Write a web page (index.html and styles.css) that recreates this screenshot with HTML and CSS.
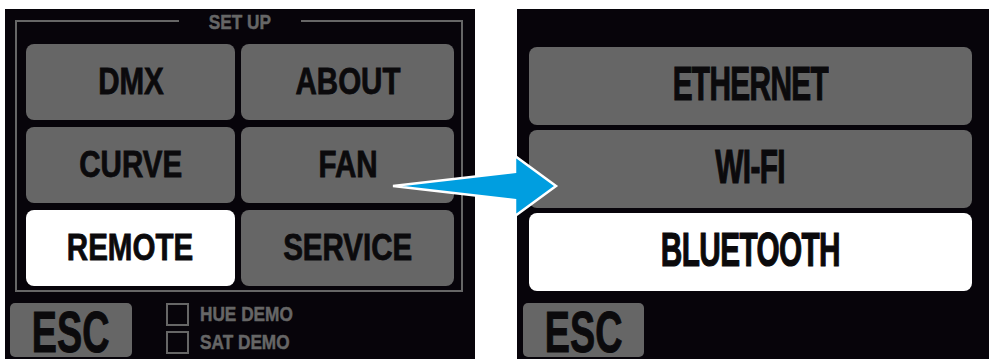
FILE: index.html
```html
<!DOCTYPE html>
<html lang="en">
<head>
  <meta charset="UTF-8">
  <title>Set Up / Remote</title>
  <meta name="viewport" content="width=device-width, initial-scale=1.0">
  <link rel="stylesheet" href="styles.css">
</head>
<body>
  <div class="stage">
    <div class="panel setup">
      <div class="frame">
        <div class="frame-title"><span class="t">SET UP</span></div>
        <div class="menu-grid">
          <div class="key"><span class="t">DMX</span></div>
          <div class="key"><span class="t">ABOUT</span></div>
          <div class="key"><span class="t">CURVE</span></div>
          <div class="key"><span class="t">FAN</span></div>
          <div class="key active"><span class="t">REMOTE</span></div>
          <div class="key"><span class="t">SERVICE</span></div>
        </div>
      </div>
      <div class="bottom-row">
        <div class="esc"><span class="t">ESC</span></div>
        <div class="options">
          <label class="option"><span class="box"></span><span class="t">HUE DEMO</span></label>
          <label class="option"><span class="box"></span><span class="t">SAT DEMO</span></label>
        </div>
      </div>
    </div>

    <div class="panel network">
      <div class="menu-list">
        <div class="key wide"><span class="t">ETHERNET</span></div>
        <div class="key wide"><span class="t">WI-FI</span></div>
        <div class="key wide active"><span class="t">BLUETOOTH</span></div>
      </div>
      <div class="esc"><span class="t">ESC</span></div>
    </div>

    <svg class="arrow" width="989" height="359" viewBox="0 0 989 359">
      <polygon points="393,186 515,172 515,156 556,186 515,216 515,200"
               fill="#009ee0" stroke="#fff" stroke-width="2.5" stroke-linejoin="miter"/>
    </svg>
  </div>
</body>
</html>
```

FILE: styles.css
```css
body {
  margin: 0;
  background: #fff;
  font-family: "Liberation Sans", Arial, sans-serif;
  font-weight: bold;
}

/* condensed look: Arial bold squeezed to Arial Narrow width */
.t {
  display: inline-block;
  transform: scaleX(0.82);
  white-space: nowrap;
  -webkit-text-stroke: 0.5px currentColor;
}

.stage {
  position: relative;
  display: flex;
  padding-top: 9px;
  height: 350px;
}

.panel {
  background: #07040a;
  height: 350px;
  box-sizing: border-box;
}

/* left screen */
.setup {
  margin-left: 5px;
  width: 470px;
  padding: 0 12px 0 5px;
}

.frame {
  margin: 11px 0 0 5px;
  border: 2px solid #666;
  padding: 0 7px 4px 9px;
}

.frame-title {
  display: table;
  margin: -11px auto 11px;
  padding: 0 23px;
  background: #07040a;
  color: #666;
  font-size: 21px;
  line-height: 22px;
}

.menu-grid {
  display: grid;
  grid-template-columns: 209px 213px;
  grid-auto-rows: 76px;
  gap: 7px 6px;
}

.key {
  display: flex;
  align-items: center;
  justify-content: center;
  background: #666;
  border-radius: 8px;
  color: #0b0a0c;
  font-size: 36px;
}

.key .t {
  -webkit-text-stroke: 0.8px currentColor;
}

.key.active {
  background: #fff;
}

.bottom-row {
  display: flex;
  align-items: flex-start;
  margin-top: 11px;
  gap: 34px;
}

.esc {
  width: 122px;
  height: 54px;
  background: #666;
  border-radius: 5px;
  color: #0b0a0c;
  font-size: 58px;
  line-height: 48px;
  text-align: center;
}

.esc .t {
  transform: scaleX(0.65);
  margin-top: 5px;
  -webkit-text-stroke: 1px currentColor;
}

.options {
  display: flex;
  flex-direction: column;
  gap: 5px;
}

.option {
  display: flex;
  align-items: center;
  gap: 11px;
  color: #666;
  font-size: 21px;
  height: 23px;
}

.option .t {
  transform-origin: left center;
  margin-top: -2px;
}

.box {
  width: 19px;
  height: 19px;
  border: 2px solid #666;
}

/* right screen */
.network {
  margin-left: 42px;
  width: 472px;
  padding: 38px 17px 0 6px;
}

.menu-list {
  display: flex;
  flex-direction: column;
  gap: 5px;
  margin-left: 6px;
}

.key.wide {
  height: 78px;
  font-size: 48px;
}

.key.wide .t {
  transform: scaleX(0.62);
  letter-spacing: -1px;
  margin-top: -6px;
  -webkit-text-stroke: 1.2px currentColor;
}

.network .esc {
  width: 121px;
  margin-top: 12px;
}

.arrow {
  position: absolute;
  left: 0;
  top: 0;
}
```
